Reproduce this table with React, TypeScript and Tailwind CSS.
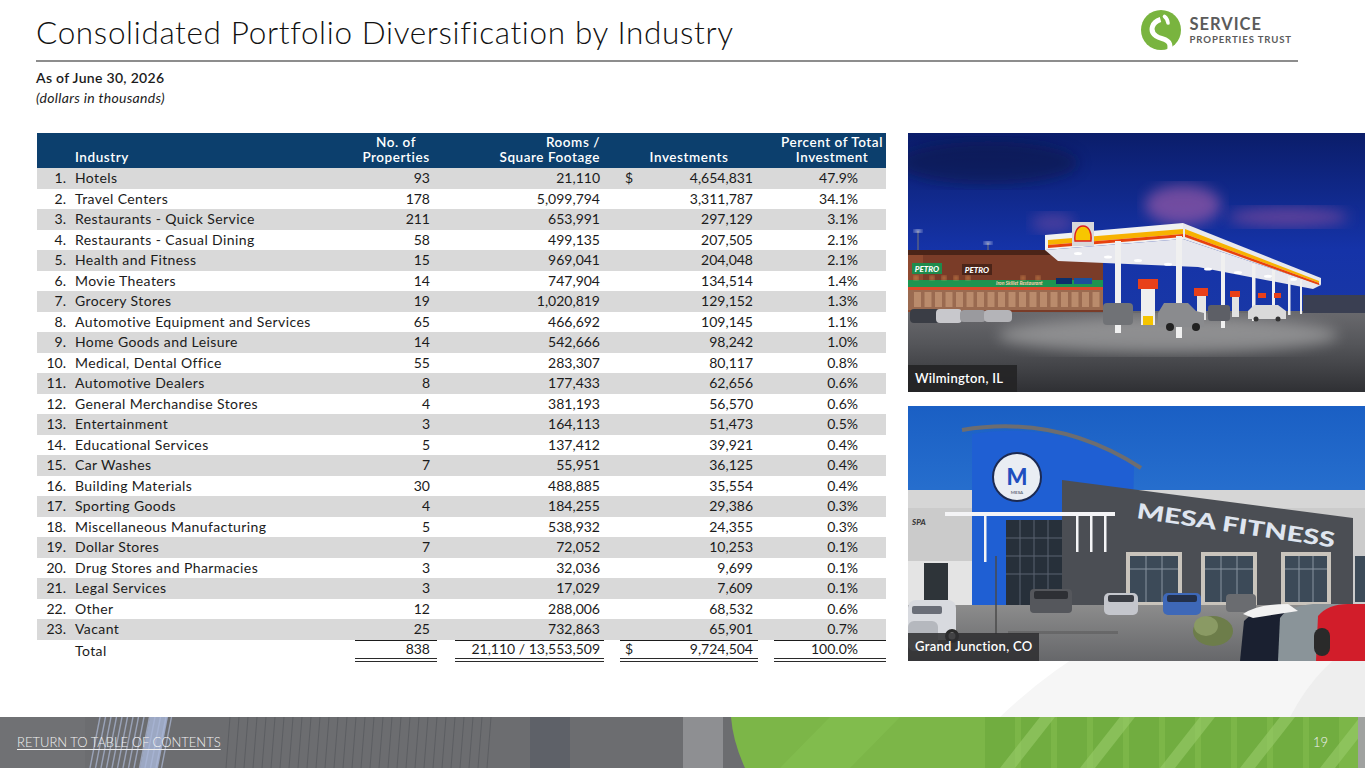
import React from 'react'

const rows: [string, string, string, string, string][] = [
  ['Hotels', '93', '21,110', '4,654,831', '47.9%'],
  ['Travel Centers', '178', '5,099,794', '3,311,787', '34.1%'],
  ['Restaurants - Quick Service', '211', '653,991', '297,129', '3.1%'],
  ['Restaurants - Casual Dining', '58', '499,135', '207,505', '2.1%'],
  ['Health and Fitness', '15', '969,041', '204,048', '2.1%'],
  ['Movie Theaters', '14', '747,904', '134,514', '1.4%'],
  ['Grocery Stores', '19', '1,020,819', '129,152', '1.3%'],
  ['Automotive Equipment and Services', '65', '466,692', '109,145', '1.1%'],
  ['Home Goods and Leisure', '14', '542,666', '98,242', '1.0%'],
  ['Medical, Dental Office', '55', '283,307', '80,117', '0.8%'],
  ['Automotive Dealers', '8', '177,433', '62,656', '0.6%'],
  ['General Merchandise Stores', '4', '381,193', '56,570', '0.6%'],
  ['Entertainment', '3', '164,113', '51,473', '0.5%'],
  ['Educational Services', '5', '137,412', '39,921', '0.4%'],
  ['Car Washes', '7', '55,951', '36,125', '0.4%'],
  ['Building Materials', '30', '488,885', '35,554', '0.4%'],
  ['Sporting Goods', '4', '184,255', '29,386', '0.3%'],
  ['Miscellaneous Manufacturing', '5', '538,932', '24,355', '0.3%'],
  ['Dollar Stores', '7', '72,052', '10,253', '0.1%'],
  ['Drug Stores and Pharmacies', '3', '32,036', '9,699', '0.1%'],
  ['Legal Services', '3', '17,029', '7,609', '0.1%'],
  ['Other', '12', '288,006', '68,532', '0.6%'],
  ['Vacant', '25', '732,863', '65,901', '0.7%'],
]

const Logo = () => (
  <div className="flex items-center gap-[9px]">
    <svg width="40" height="40" viewBox="0 0 40 40">
      <circle cx="20" cy="20" r="20" fill="#79b43f" />
      <path d="M23.5 6.5 C25.5 8, 26.8 10, 27 13" stroke="#fff" strokeWidth="3.6" strokeLinecap="round" fill="none" />
      <path d="M19.5 9.5 C11 12, 8 21, 15 26 C20 29.5, 27 28.5, 28.6 34 C29.2 36.5, 29 38.5, 28.6 40" stroke="#fff" strokeWidth="5" fill="none" />
    </svg>
    <div className="flex flex-col font-bold text-[#5b5b5b]">
      <span className="text-[16.5px] leading-[16px] tracking-[0.06em]">SERVICE</span>
      <span className="mt-[3px] text-[9.6px] leading-[10px] tracking-[0.09em]">PROPERTIES TRUST</span>
    </div>
  </div>
)

const GasStation = () => (
  <svg width="457" height="259" viewBox="0 0 457 259" preserveAspectRatio="none" className="block">
    <defs>
      <linearGradient id="sky1" x1="0" y1="0" x2="0" y2="1">
        <stop offset="0" stopColor="#0b1d6a" />
        <stop offset="0.45" stopColor="#1533a8" />
        <stop offset="1" stopColor="#1d3ca4" />
      </linearGradient>
      <linearGradient id="ground1" x1="0" y1="0" x2="0" y2="1">
        <stop offset="0" stopColor="#6a6a6e" />
        <stop offset="0.4" stopColor="#55565a" />
        <stop offset="1" stopColor="#2f3034" />
      </linearGradient>
      <filter id="blur1">
        <feGaussianBlur stdDeviation="7" />
      </filter>
      <filter id="blur2">
        <feGaussianBlur stdDeviation="2" />
      </filter>
    </defs>
    <rect width="457" height="259" fill="url(#sky1)" />
    <ellipse cx="275" cy="72" rx="38" ry="20" fill="#9a5aa8" opacity="0.7" filter="url(#blur1)" />
    <ellipse cx="380" cy="84" rx="60" ry="10" fill="#7a4a9c" opacity="0.7" filter="url(#blur1)" />
    <ellipse cx="145" cy="90" rx="22" ry="10" fill="#6a4aa0" opacity="0.6" filter="url(#blur1)" />
    <ellipse cx="80" cy="30" rx="90" ry="22" fill="#081240" opacity="0.5" filter="url(#blur1)" />
    <rect y="178" width="457" height="81" fill="url(#ground1)" />
    <ellipse cx="260" cy="202" rx="170" ry="18" fill="#b8b8b8" opacity="0.55" filter="url(#blur1)" />
    <rect x="395" y="162" width="62" height="18" fill="#3a3f52" />
    <line x1="10" y1="98" x2="10" y2="118" stroke="#777" strokeWidth="1" />
    <ellipse cx="10" cy="98" rx="4" ry="1.6" fill="#fff" filter="url(#blur2)" />
    <line x1="80" y1="110" x2="80" y2="120" stroke="#777" strokeWidth="1" />
    <ellipse cx="80" cy="110" rx="4" ry="1.6" fill="#fff" filter="url(#blur2)" />
    <rect x="0" y="117" width="195" height="62" fill="#7a3c28" />
    <rect x="0" y="117" width="195" height="5" fill="#4b2418" />
    <rect x="0" y="122" width="15" height="57" fill="#8e4a30" />
    <rect x="0" y="147" width="195" height="7" fill="#1d9450" />
    <rect x="0" y="154" width="195" height="3" fill="#d84a2a" />
    <rect x="0" y="157" width="195" height="20" fill="#9a6a50" />
    {Array.from({ length: 18 }).map((_, i) => (
      <rect key={i} x={6 + i * 10.5} y="159" width="7" height="15" fill="#c79a78" opacity="0.7" />
    ))}
    <rect x="4" y="130" width="30" height="11" fill="#1f8b4c" />
    <text x="19" y="139" textAnchor="middle" fontFamily="Lato, sans-serif" fontWeight="900" fontStyle="italic" fontSize="8" fill="#fff">PETRO</text>
    <rect x="54" y="131" width="30" height="11" fill="#4b2418" />
    <text x="69" y="140" textAnchor="middle" fontFamily="Lato, sans-serif" fontWeight="900" fontStyle="italic" fontSize="8" fill="#fff">PETRO</text>
    <text x="88" y="152" fontFamily="Lato, sans-serif" fontWeight="700" fontStyle="italic" fontSize="5" fill="#ffcfb0">Iron Skillet Restaurant</text>
    <rect x="148" y="145" width="16" height="6" fill="#0b2f6a" />
    <rect x="166" y="145" width="18" height="6" fill="#1b4f9a" />
    {[8, 24, 36, 48, 60, 115, 130].map((x, i) => (
      <circle key={i} cx={x} cy="145" r="2" fill="#ffb060" filter="url(#blur2)" />
    ))}
    <rect x="2" y="176" width="30" height="14" rx="4" fill="#3a3d45" />
    <rect x="28" y="176" width="26" height="14" rx="4" fill="#c8c8cc" />
    <rect x="52" y="177" width="26" height="12" rx="4" fill="#9a9a9e" />
    <rect x="76" y="177" width="28" height="12" rx="4" fill="#b4b4b8" />
    <polygon points="137,117 275,106 413,152 405,156 290,134 150,128" fill="#e6e7ee" />
    {[170, 200, 230, 260, 300, 330, 360, 385].map((x, i) => (
      <ellipse key={i} cx={x} cy={118 + (x - 150) * 0.12} rx="4" ry="1.5" fill="#fff" />
    ))}
    <polygon points="137,102 275,90 275,106 137,117" fill="#f1f1f1" />
    <polygon points="140,107 275,96 275,101 140,112" fill="#f7b200" />
    <polygon points="140,112 275,101 275,104 140,115" fill="#e8420e" />
    <polygon points="275,90 413,145 413,152 275,106" fill="#e9e9ec" />
    <polygon points="277,96 411,148 411,150 277,101" fill="#f7b200" />
    <polygon points="277,101 411,150 411,152 277,104" fill="#e8420e" />
    <rect x="164" y="89" width="22" height="24" fill="#d8d8da" />
    <path d="M167 108 C166 100, 169 93, 175 93 C181 93, 184 100, 183 108 Z" fill="#f7c600" stroke="#dd1d21" strokeWidth="1.4" />
    {[
      [207, 108, 200, 6],
      [268, 103, 205, 6],
      [313, 120, 195, 4],
      [344, 131, 188, 3.5],
      [364, 137, 184, 3],
      [380, 143, 182, 2.5],
      [392, 147, 181, 2],
    ].map(([x, y1, y2, w], i) => (
      <rect key={i} x={x} y={y1} width={w} height={y2 - y1} fill="#f0f0f0" />
    ))}
    <rect x="230" y="146" width="20" height="10" fill="#e8401a" />
    <rect x="233" y="156" width="14" height="36" fill="#efefef" />
    <rect x="235" y="183" width="10" height="9" fill="#f5c400" />
    <rect x="286" y="155" width="14" height="8" fill="#e8401a" />
    <rect x="289" y="163" width="9" height="24" fill="#e6e6e6" />
    <rect x="322" y="158" width="10" height="6" fill="#e8401a" />
    <rect x="324" y="164" width="7" height="20" fill="#e2e2e2" />
    <rect x="350" y="160" width="8" height="5" fill="#e8401a" />
    <rect x="366" y="160" width="7" height="5" fill="#e8401a" />
    <rect x="195" y="170" width="30" height="22" rx="4" fill="#707276" />
    <path d="M250 180 L256 170 L280 170 L288 178 L296 180 L296 194 L250 194 Z" fill="#8a8b8e" />
    <circle cx="262" cy="194" r="4" fill="#222" />
    <circle cx="288" cy="194" r="4" fill="#222" />
    <rect x="300" y="172" width="22" height="16" rx="3" fill="#5d5f66" />
    <path d="M340 178 L346 172 L370 172 L378 178 L378 186 L340 186 Z" fill="#dadada" />
    <circle cx="348" cy="186" r="2.5" fill="#333" />
    <circle cx="370" cy="186" r="2.5" fill="#333" />
  </svg>
)

const Fitness = () => (
  <svg width="457" height="255" viewBox="0 0 457 255" preserveAspectRatio="none" className="block">
    <defs>
      <linearGradient id="sky2" x1="0" y1="0" x2="0" y2="1">
        <stop offset="0" stopColor="#1a5fc4" />
        <stop offset="1" stopColor="#3f8de0" />
      </linearGradient>
      <linearGradient id="ground2" x1="0" y1="0" x2="0" y2="1">
        <stop offset="0" stopColor="#8c8c8c" />
        <stop offset="1" stopColor="#66676a" />
      </linearGradient>
    </defs>
    <rect width="457" height="255" fill="url(#sky2)" />
    <rect x="0" y="84" width="457" height="116" fill="#cbcbcb" />
    <rect x="0" y="84" width="457" height="18" fill="#d6d6d6" />
    <rect x="0" y="155" width="64" height="45" fill="#e4e4e4" />
    <rect x="16" y="157" width="24" height="43" fill="#2e3439" />
    <text x="4" y="119" fontFamily="Lato, sans-serif" fontWeight="900" fontStyle="italic" fontSize="8" fill="#3a3a3a">SPA</text>
    <path d="M64 200 L64 28 Q150 14 226 60 L223 200 Z" fill="#1f5fd3" />
    <path d="M54 24 Q150 8 233 62" stroke="#6d6d70" strokeWidth="4" fill="none" />
    <circle cx="109" cy="71" r="24" fill="#e9edf3" stroke="#1c2a52" strokeWidth="2" />
    <text x="109" y="79" textAnchor="middle" fontFamily="Lato, sans-serif" fontWeight="900" fontSize="22" fill="#1f4fbf">M</text>
    <text x="109" y="88" textAnchor="middle" fontFamily="Lato, sans-serif" fontWeight="700" fontSize="4.5" fill="#6a7080">MESA</text>
    <polygon points="154,74 445,112 445,200 154,200" fill="#4b4e54" />
    <text x="228" y="112" transform="rotate(8.5 228 112)" fontFamily="Lato, sans-serif" fontWeight="900" fontSize="21" fill="#dfe5ef" textLength="200" lengthAdjust="spacingAndGlyphs">MESA FITNESS</text>
    <rect x="98" y="114" width="56" height="86" fill="#27303a" />
    {[112, 126, 140].map((x) => (
      <line key={x} x1={x} y1="114" x2={x} y2="200" stroke="#5a6370" strokeWidth="1" />
    ))}
    {[132, 150, 168].map((y) => (
      <line key={y} x1="98" y1={y} x2="154" y2={y} stroke="#5a6370" strokeWidth="1" />
    ))}
    <rect x="37" y="106" width="170" height="4" fill="#f4f4f6" />
    {[76, 168, 182, 196].map((x) => (
      <rect key={x} x={x} y="110" width="2.5" height={x === 76 ? 46 : 36} fill="#f4f4f6" />
    ))}
    {[
      [222, 48],
      [297, 48],
      [377, 42],
    ].map(([x, w]) => (
      <g key={x}>
        <rect x={x - 4} y="146" width={w + 8} height="54" fill="#c9c4bc" />
        <rect x={x} y="150" width={w} height="46" fill="#3c4a58" />
        <line x1={x + w / 3} y1="150" x2={x + w / 3} y2="196" stroke="#8894a0" />
        <line x1={x + (2 * w) / 3} y1="150" x2={x + (2 * w) / 3} y2="196" stroke="#8894a0" />
        <line x1={x} y1="163" x2={x + w} y2="163" stroke="#8894a0" />
      </g>
    ))}
    <rect x="447" y="150" width="10" height="46" fill="#3c4a58" />
    <rect x="0" y="199" width="457" height="56" fill="url(#ground2)" />
    <rect x="100" y="225" width="110" height="3" fill="#555" opacity="0.5" />
    <line x1="88" y1="150" x2="88" y2="228" stroke="#4a4a4a" strokeWidth="1.5" />
    <rect x="122" y="183" width="42" height="24" rx="4" fill="#55575c" />
    <rect x="126" y="185" width="34" height="8" rx="2" fill="#2e3035" />
    <rect x="196" y="187" width="34" height="22" rx="5" fill="#c4c6cc" />
    <rect x="200" y="189" width="26" height="7" rx="2" fill="#3a3d44" />
    <rect x="255" y="187" width="38" height="22" rx="5" fill="#3e68b8" />
    <rect x="259" y="189" width="30" height="7" rx="2" fill="#23304a" />
    <rect x="318" y="188" width="30" height="18" rx="4" fill="#6a6c70" />
    <ellipse cx="305" cy="225" rx="20" ry="15" fill="#6d7d4a" />
    <ellipse cx="298" cy="220" rx="12" ry="10" fill="#8a9a64" />
    <rect x="0" y="194" width="48" height="40" rx="8" fill="#d8dadf" />
    <rect x="4" y="200" width="30" height="8" rx="2" fill="#6a6e78" />
    <circle cx="44" cy="230" r="7" fill="#2a2a2a" />
    <circle cx="44" cy="230" r="3.5" fill="#bbb" />
    <rect x="0" y="215" width="30" height="30" rx="6" fill="#b5b8be" />
    <path d="M332 255 L336 215 Q345 205 370 202 L410 202 L410 255 Z" fill="#1a2030" />
    <path d="M370 255 L372 212 Q380 200 405 198 L440 198 L440 255 Z" fill="#8a9499" />
    <path d="M408 255 L410 210 Q420 198 440 198 L457 198 L457 255 Z" fill="#d21d2a" />
    <rect x="406" y="222" width="16" height="28" rx="8" fill="#2a2a2a" />
    <path d="M335 208 Q350 198 380 198 L390 205 L345 212 Z" fill="#f2f2f2" />
  </svg>
)

const FooterArt = () => (
  <svg width="1365" height="51" viewBox="0 0 1365 51" preserveAspectRatio="none" className="absolute inset-0">
    <rect width="1365" height="51" fill="#6c6d70" />
    <rect x="0" y="0" width="85" height="51" fill="#707174" />
    {Array.from({ length: 14 }).map((_, i) => (
      <line key={i} x1={90 + i * 5.5} y1="51" x2={100 + i * 5.5} y2="0" stroke="#9aa3b8" strokeWidth="1.4" />
    ))}
    <polygon points="150,0 168,0 158,51 140,51" fill="#a9b6d8" opacity="0.8" />
    {Array.from({ length: 30 }).map((_, i) => (
      <line key={i} x1={230 + i * 9} y1="0" x2={226 + i * 9} y2="51" stroke="#5c5e62" strokeWidth="1" />
    ))}
    <rect x="530" y="0" width="40" height="51" fill="#5e6168" />
    <rect x="683" y="0" width="40" height="51" fill="#8e8f92" />
    <path d="M731 0 L1365 0 L1365 51 L745 51 Q733 25 731 0 Z" fill="#7cb648" />
    <polygon points="780,51 830,0 900,0 850,51" fill="#86c052" opacity="0.6" />
    {Array.from({ length: 10 }).map((_, i) => (
      <rect key={i} x={985 + i * 36} y="0" width="30" height="51" fill="#6aa63c" opacity="0.6" />
    ))}
    {Array.from({ length: 5 }).map((_, i) => (
      <polygon key={i} points={`${1000 + i * 80},51 ${1040 + i * 80},0 ${1055 + i * 80},0 ${1015 + i * 80},51`} fill="#9acb6a" opacity="0.6" />
    ))}
    <rect x="1358" y="0" width="7" height="51" fill="#a0a2a0" />
  </svg>
)

const totalCell =
  'border-b-4 border-double border-b-[#2a2a2a] border-t-[1.5px] border-t-[#1b1b1b] [border-top-style:solid]'

export default function App() {
  return (
    <div className="relative flex h-[768px] w-[1365px] flex-col overflow-hidden bg-white font-['Lato',sans-serif] text-[#1b1b1b] [font-variant-ligatures:none]">
      <svg className="absolute left-0 top-0" width="1365" height="768" viewBox="0 0 1365 768">
        <path d="M1000 717 Q1080 640 1190 600 Q1290 570 1365 600 L1365 717 Z" fill="#f6f6f6" />
        <path d="M1290 717 Q1320 660 1365 640 L1365 717 Z" fill="#eeeeee" />
      </svg>

      <div className="relative ml-[36px] flex h-[62px] w-[1262px] items-start justify-between border-b-2 border-[#8d8d8d]">
        <h1 className="mt-[17px] text-[31.5px] font-light leading-none tracking-[0.65px] text-[#111]">
          Consolidated Portfolio Diversification by Industry
        </h1>
        <div className="mr-[6px] mt-[10px]">
          <Logo />
        </div>
      </div>

      <div className="relative ml-[36px] mt-[6px] text-[14px] leading-[20px] tracking-[0.3px]">
        <p className="font-semibold">As of June 30, 2026</p>
        <p className="italic">(dollars in thousands)</p>
      </div>

      <div className="relative mt-[25px] flex items-start gap-[22px] pl-[37px]">
        <table className="w-[849px] table-fixed border-separate border-spacing-0 text-[14px] leading-none">
          <colgroup>
            <col className="w-[33px]" />
            <col className="w-[285px]" />
            <col className="w-[82px]" />
            <col className="w-[18px]" />
            <col className="w-[149px]" />
            <col className="w-[16px]" />
            <col className="w-[138px]" />
            <col className="w-[16px]" />
            <col className="w-[112px]" />
          </colgroup>
          <thead>
            <tr className="h-[35px] bg-[#0c3f6d] align-bottom text-[13.5px] font-semibold leading-[15px] tracking-[0.55px] text-white">
              <th />
              <th className="pb-[3px] pl-[5px] text-left font-semibold">Industry</th>
              <th className="pb-[3px] text-center font-semibold">
                No. of
                <br />
                Properties
              </th>
              <th />
              <th className="pb-[3px] pr-[4px] text-right font-semibold">
                Rooms /
                <br />
                Square Footage
              </th>
              <th />
              <th className="pb-[3px] text-center font-semibold">Investments</th>
              <th />
              <th className="pb-[3px] pl-[4px] text-center font-semibold">
                Percent of Total
                <br />
                Investment
              </th>
            </tr>
          </thead>
          <tbody>
            {rows.map(([name, props, rooms, inv, pct], i) => (
              <tr key={name} className={`h-[20.5px] ${i % 2 === 0 ? 'bg-[#d9d9d9]' : 'bg-white'}`}>
                <td className="pr-[4px] text-right">{i + 1}.</td>
                <td className="pl-[5px] tracking-[0.4px]">{name}</td>
                <td className="pr-[7px] text-right">{props}</td>
                <td />
                <td className="pr-[4px] text-right">{rooms}</td>
                <td />
                <td className="px-[5px]">
                  <div className="flex justify-between">
                    <span>{i === 0 ? '$' : ''}</span>
                    <span>{inv}</span>
                  </div>
                </td>
                <td />
                <td className="pr-[28px] text-right">{pct}</td>
              </tr>
            ))}
            <tr className="h-[22px]">
              <td />
              <td className="pl-[5px] tracking-[0.4px]">Total</td>
              <td className={`${totalCell} pr-[7px] text-right`}>838</td>
              <td />
              <td className={`${totalCell} pr-[4px] text-right`}>21,110 / 13,553,509</td>
              <td />
              <td className={`${totalCell} px-[5px]`}>
                <div className="flex justify-between">
                  <span>$</span>
                  <span>9,724,504</span>
                </div>
              </td>
              <td />
              <td className={`${totalCell} pr-[28px] text-right`}>100.0%</td>
            </tr>
          </tbody>
        </table>

        <div className="flex w-[457px] flex-col gap-[14px]">
          <div className="relative h-[259px]">
            <GasStation />
            <div className="absolute bottom-0 left-0 flex h-[27px] w-[109px] items-center bg-[#232325]/90 pl-[7px] text-[13px] font-semibold tracking-[0.3px] text-white">
              Wilmington, IL
            </div>
          </div>
          <div className="relative h-[255px]">
            <Fitness />
            <div className="absolute bottom-0 left-0 flex h-[28px] w-[131px] items-center bg-[#2e2e30]/85 pl-[7px] text-[13px] font-semibold tracking-[0.3px] text-white">
              Grand Junction, CO
            </div>
          </div>
        </div>
      </div>

      <div className="flex-1" />

      <div className="relative h-[51px] w-full">
        <FooterArt />
        <div className="relative flex h-full items-center justify-between pl-[17px] pr-[37px] text-[13px] font-light text-[#f2f2f2]">
          <span className="underline underline-offset-2">RETURN TO TABLE OF CONTENTS</span>
          <span>19</span>
        </div>
      </div>
    </div>
  )
}
